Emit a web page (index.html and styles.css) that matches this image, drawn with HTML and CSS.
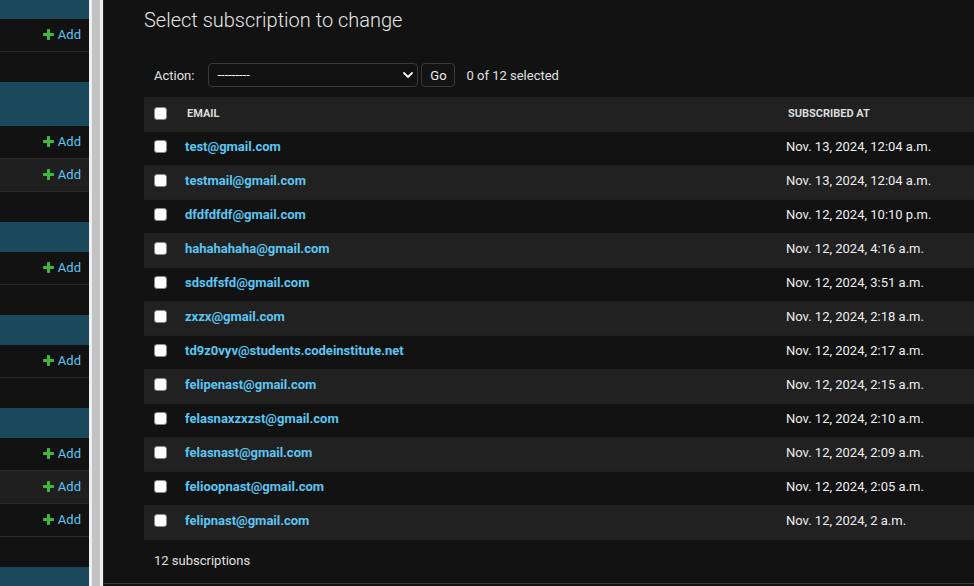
FILE: index.html
```html
<!DOCTYPE html>
<html lang="en">
<head>
<meta charset="utf-8">
<title>Select subscription to change</title>
<link rel="stylesheet" href="styles.css">
</head>
<body>
<div class="page">
  <nav class="sidebar">
    <div class="module">
      <div class="caption caption-short"></div>
      <div class="nav-row"><a class="addlink" href="#"><svg class="plus" viewBox="192 192 1408 1408"><path d="M1600 796v192q0 40-28 68t-68 28h-416v416q0 40-28 68t-68 28h-192q-40 0-68-28t-28-68v-416h-416q-40 0-68-28t-28-68v-192q0-40 28-68t68-28h416v-416q0-40 28-68t68-28h192q40 0 68 28t28 68v416h416q40 0 68 28t28 68z"/></svg>Add</a></div>
    </div>
    <div class="module">
      <div class="caption caption-tall"></div>
      <div class="nav-row"><a class="addlink" href="#"><svg class="plus" viewBox="192 192 1408 1408"><path d="M1600 796v192q0 40-28 68t-68 28h-416v416q0 40-28 68t-68 28h-192q-40 0-68-28t-28-68v-416h-416q-40 0-68-28t-28-68v-192q0-40 28-68t68-28h416v-416q0-40 28-68t68-28h192q40 0 68 28t28 68v416h416q40 0 68 28t28 68z"/></svg>Add</a></div>
      <div class="nav-row current"><a class="addlink" href="#"><svg class="plus" viewBox="192 192 1408 1408"><path d="M1600 796v192q0 40-28 68t-68 28h-416v416q0 40-28 68t-68 28h-192q-40 0-68-28t-28-68v-416h-416q-40 0-68-28t-28-68v-192q0-40 28-68t68-28h416v-416q0-40 28-68t68-28h192q40 0 68 28t28 68v416h416q40 0 68 28t28 68z"/></svg>Add</a></div>
    </div>
    <div class="module">
      <div class="caption"></div>
      <div class="nav-row"><a class="addlink" href="#"><svg class="plus" viewBox="192 192 1408 1408"><path d="M1600 796v192q0 40-28 68t-68 28h-416v416q0 40-28 68t-68 28h-192q-40 0-68-28t-28-68v-416h-416q-40 0-68-28t-28-68v-192q0-40 28-68t68-28h416v-416q0-40 28-68t68-28h192q40 0 68 28t28 68v416h416q40 0 68 28t28 68z"/></svg>Add</a></div>
    </div>
    <div class="module">
      <div class="caption"></div>
      <div class="nav-row"><a class="addlink" href="#"><svg class="plus" viewBox="192 192 1408 1408"><path d="M1600 796v192q0 40-28 68t-68 28h-416v416q0 40-28 68t-68 28h-192q-40 0-68-28t-28-68v-416h-416q-40 0-68-28t-28-68v-192q0-40 28-68t68-28h416v-416q0-40 28-68t68-28h192q40 0 68 28t28 68v416h416q40 0 68 28t28 68z"/></svg>Add</a></div>
    </div>
    <div class="module">
      <div class="caption"></div>
      <div class="nav-row"><a class="addlink" href="#"><svg class="plus" viewBox="192 192 1408 1408"><path d="M1600 796v192q0 40-28 68t-68 28h-416v416q0 40-28 68t-68 28h-192q-40 0-68-28t-28-68v-416h-416q-40 0-68-28t-28-68v-192q0-40 28-68t68-28h416v-416q0-40 28-68t68-28h192q40 0 68 28t28 68v416h416q40 0 68 28t28 68z"/></svg>Add</a></div>
      <div class="nav-row current"><a class="addlink" href="#"><svg class="plus" viewBox="192 192 1408 1408"><path d="M1600 796v192q0 40-28 68t-68 28h-416v416q0 40-28 68t-68 28h-192q-40 0-68-28t-28-68v-416h-416q-40 0-68-28t-28-68v-192q0-40 28-68t68-28h416v-416q0-40 28-68t68-28h192q40 0 68 28t28 68v416h416q40 0 68 28t28 68z"/></svg>Add</a></div>
      <div class="nav-row"><a class="addlink" href="#"><svg class="plus" viewBox="192 192 1408 1408"><path d="M1600 796v192q0 40-28 68t-68 28h-416v416q0 40-28 68t-68 28h-192q-40 0-68-28t-28-68v-416h-416q-40 0-68-28t-28-68v-192q0-40 28-68t68-28h416v-416q0-40 28-68t68-28h192q40 0 68 28t28 68v416h416q40 0 68 28t28 68z"/></svg>Add</a></div>
    </div>
    <div class="module">
      <div class="caption"></div>
    </div>
  </nav>
  <div class="scrollbar"><div class="thumb"></div></div>
  <main class="main">
    <div class="content">
      <h1 class="title">Select subscription to change</h1>
      <div class="actions">
        <label class="action-label">Action:</label>
        <span class="select-wrap">
          <select class="action-select"><option>---------</option></select>
          <svg class="chevron" width="10" height="6" viewBox="0 0 10 6"><path d="M1 1l4 4 4-4" fill="none" stroke="#f0f0f0" stroke-width="1.8" stroke-linecap="round" stroke-linejoin="round"/></svg>
        </span>
        <button class="go-btn">Go</button>
        <span class="counter">0 of 12 selected</span>
      </div>
      <table class="results">
        <colgroup><col class="c-check"><col class="c-email"><col class="c-date"></colgroup>
        <thead>
          <tr><th class="cb-cell"><input type="checkbox" class="cb"></th><th>Email</th><th>Subscribed at</th></tr>
        </thead>
        <tbody>
          <tr class="row1"><td class="cb-cell"><input type="checkbox" class="cb"></td><th><a href="#">test@gmail.com</a></th><td>Nov. 13, 2024, 12:04 a.m.</td></tr>
          <tr class="row2"><td class="cb-cell"><input type="checkbox" class="cb"></td><th><a href="#">testmail@gmail.com</a></th><td>Nov. 13, 2024, 12:04 a.m.</td></tr>
          <tr class="row1"><td class="cb-cell"><input type="checkbox" class="cb"></td><th><a href="#">dfdfdfdf@gmail.com</a></th><td>Nov. 12, 2024, 10:10 p.m.</td></tr>
          <tr class="row2"><td class="cb-cell"><input type="checkbox" class="cb"></td><th><a href="#">hahahahaha@gmail.com</a></th><td>Nov. 12, 2024, 4:16 a.m.</td></tr>
          <tr class="row1"><td class="cb-cell"><input type="checkbox" class="cb"></td><th><a href="#">sdsdfsfd@gmail.com</a></th><td>Nov. 12, 2024, 3:51 a.m.</td></tr>
          <tr class="row2"><td class="cb-cell"><input type="checkbox" class="cb"></td><th><a href="#">zxzx@gmail.com</a></th><td>Nov. 12, 2024, 2:18 a.m.</td></tr>
          <tr class="row1"><td class="cb-cell"><input type="checkbox" class="cb"></td><th><a href="#">td9z0vyv@students.codeinstitute.net</a></th><td>Nov. 12, 2024, 2:17 a.m.</td></tr>
          <tr class="row2"><td class="cb-cell"><input type="checkbox" class="cb"></td><th><a href="#">felipenast@gmail.com</a></th><td>Nov. 12, 2024, 2:15 a.m.</td></tr>
          <tr class="row1"><td class="cb-cell"><input type="checkbox" class="cb"></td><th><a href="#">felasnaxzxzst@gmail.com</a></th><td>Nov. 12, 2024, 2:10 a.m.</td></tr>
          <tr class="row2"><td class="cb-cell"><input type="checkbox" class="cb"></td><th><a href="#">felasnast@gmail.com</a></th><td>Nov. 12, 2024, 2:09 a.m.</td></tr>
          <tr class="row1"><td class="cb-cell"><input type="checkbox" class="cb"></td><th><a href="#">felioopnast@gmail.com</a></th><td>Nov. 12, 2024, 2:05 a.m.</td></tr>
          <tr class="row2"><td class="cb-cell"><input type="checkbox" class="cb"></td><th><a href="#">felipnast@gmail.com</a></th><td>Nov. 12, 2024, 2 a.m.</td></tr>
        </tbody>
      </table>
      <p class="paginator">12 subscriptions</p>
    </div>
    <div class="footer-line"></div>
  </main>
</div>
</body>
</html>
```

FILE: styles.css
```css
* { box-sizing: border-box; }

html, body {
  margin: 0;
  padding: 0;
  background: #121212;
  height: 100%;
  overflow: hidden;
}

body {
  font-family: Roboto, "Liberation Sans", sans-serif;
  font-size: 13px;
  color: #eeeeee;
}

.page {
  display: flex;
  height: 586px;
  width: 974px;
  overflow: hidden;
}

/* Sidebar */
.sidebar {
  width: 89px;
  flex: none;
  display: flex;
  flex-direction: column;
  overflow: hidden;
  background: #121212;
}

.module {
  margin-bottom: 30px;
  flex: none;
}

.caption {
  height: 30px;
  background: #1b4a5d;
}

.caption-short { height: 19px; }
.caption-tall { height: 44px; }

.nav-row {
  height: 33px;
  border-bottom: 1px solid #2a2a2a;
  display: flex;
  align-items: center;
  justify-content: flex-end;
  padding: 0 8px 1px 0;
  background: #121212;
}

.nav-row.current { background: #1f1f1f; }

.addlink {
  display: flex;
  align-items: center;
  color: #5cc6f2;
  text-decoration: none;
  font-size: 13px;
  line-height: 16px;
}

.plus {
  width: 11px;
  height: 11px;
  margin-right: 4px;
  fill: #3fb83a;
}

/* Sidebar scrollbar */
.scrollbar {
  width: 14px;
  flex: none;
  background: #efefef;
  padding: 0 3px 0 3px;
}

.thumb {
  height: 100%;
  background: #c2c2c2;
}

/* Main */
.main {
  flex: 1;
  min-width: 0;
  border-left: 1px solid #262626;
  display: flex;
  flex-direction: column;
  overflow: hidden;
}

.content {
  padding: 8px 0 0 40px;
}

.title {
  margin: 0;
  font-size: 20px;
  line-height: 24px;
  font-weight: 300;
  color: #e6e6e6;
  white-space: nowrap;
}

.actions {
  margin-top: 31px;
  height: 24px;
  padding: 0 10px;
  display: flex;
  align-items: center;
  color: #e0e0e0;
  white-space: nowrap;
}

.action-label {
  margin-right: 14px;
}

.select-wrap {
  position: relative;
  display: inline-block;
  height: 24px;
}

.action-select {
  appearance: none;
  -webkit-appearance: none;
  width: 210px;
  height: 24px;
  background: #121212;
  color: #ffffff;
  border: 1px solid #3a3a3a;
  border-radius: 4px;
  padding: 0 24px 0 8px;
  font-family: Roboto, "Liberation Sans", sans-serif;
  font-size: 13px;
  line-height: 22px;
  display: block;
}

.chevron {
  position: absolute;
  right: 5px;
  top: 9px;
  pointer-events: none;
}

.go-btn {
  margin-left: 3px;
  width: 34px;
  height: 24px;
  background: #131313;
  color: #eeeeee;
  border: 1px solid #3a3a3a;
  border-radius: 4px;
  font-family: Roboto, "Liberation Sans", sans-serif;
  font-size: 13px;
  padding: 0;
}

.counter {
  margin-left: 11px;
  color: #e0e0e0;
}

/* Results table */
.results {
  margin-top: 10px;
  border-collapse: collapse;
  table-layout: fixed;
  width: 900px;
}

.c-check { width: 31px; }
.c-email { width: 601px; }
.c-date { width: 268px; }

.results th,
.results td {
  text-align: left;
  vertical-align: top;
  white-space: nowrap;
  border-bottom: 1px solid #1e1e1e;
}

.results thead th {
  background: #212121;
  font-size: 11px;
  line-height: 14px;
  font-weight: 700;
  text-transform: uppercase;
  color: #dcdcdc;
  padding: 10px 10px 9px 12px;
  height: 34px;
}

.results thead th.cb-cell {
  padding-left: 10px;
}

.results tbody th,
.results tbody td {
  font-size: 13px;
  line-height: 16px;
  padding: 7px 10px 10px 10px;
  height: 34px;
}

.results tbody th {
  font-weight: 700;
}

.results tbody td {
  color: #eeeeee;
}

.results a {
  color: #5cc6f2;
  text-decoration: none;
}

.row1 th, .row1 td { background: #121212; }
.row2 th, .row2 td { background: #212121; }

.cb {
  appearance: none;
  -webkit-appearance: none;
  display: block;
  width: 13px;
  height: 13px;
  margin: 0;
  background: #ffffff;
  border: 1px solid #8a8a8a;
  border-radius: 3px;
}

.results tbody .cb { margin-top: 1px; }

.paginator {
  margin: 0;
  padding: 13px 10px 14px;
  line-height: 16px;
  font-size: 13px;
  color: #e0e0e0;
}

.footer-line {
  height: 1px;
  background: #3a3a3a;
}
```
